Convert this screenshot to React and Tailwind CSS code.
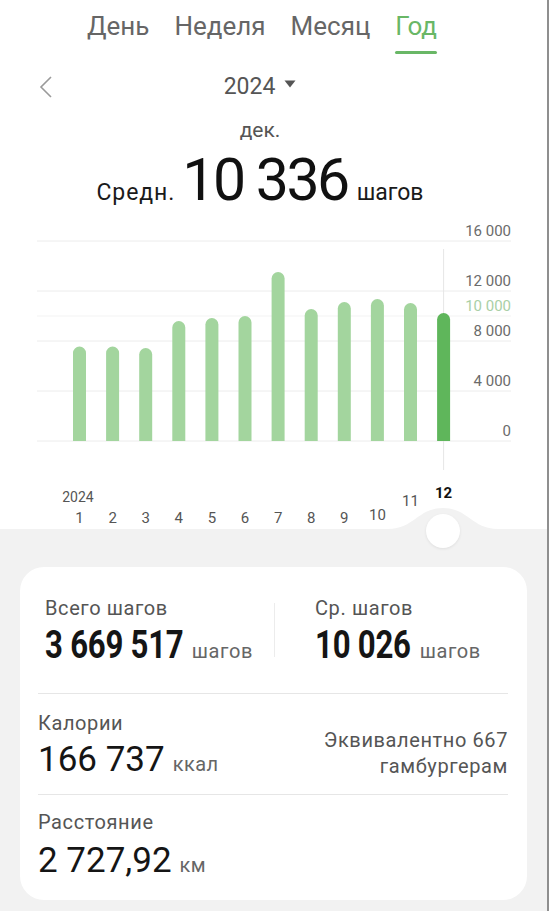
import React from "react";

const tabs = ["День", "Неделя", "Месяц", "Год"];

// top of each monthly bar in chart coordinates (baseline at 221)
const barTops = [126.5, 126.5, 128, 101, 98, 96, 52, 89, 82, 79, 83, 93];

const gridLines = [
  { y: 21, label: "16 000" },
  { y: 71, label: "12 000" },
  { y: 96, label: "10 000", goal: true },
  { y: 121, label: "8 000" },
  { y: 171, label: "4 000" },
  { y: 221, label: "0" },
];

// month labels sit on a curved dial, the selected one rises highest
const monthLabelY = [298, 298, 298, 298, 298, 298, 298, 298, 298, 295, 281, 273];

const barX = (i) => 79.5 + i * 33.1;

function barPath(cx, top, w = 13, base = 221) {
  const r = w / 2;
  const x = cx - r;
  return `M${x} ${base} V${top + r} A${r} ${r} 0 0 1 ${x + w} ${top + r} V${base} Z`;
}

function YearChart() {
  const selected = 11;
  return (
    <svg width="549" height="309" viewBox="0 0 549 309" className="block">
      {gridLines.map((g) => (
        <g key={g.label}>
          <line x1="37" x2="511" y1={g.y} y2={g.y} stroke={g.goal ? "#f3f3f3" : "#ececec"} strokeWidth="1" />
          <text
            x="511"
            y={g.y - 10}
            textAnchor="end"
            dominantBaseline="central"
            fontFamily="Roboto, sans-serif"
            fontSize="15"
            fill={g.goal ? "#a9cfa6" : "#6b6b6b"}
          >
            {g.label}
          </text>
        </g>
      ))}
      <line x1={barX(selected)} x2={barX(selected)} y1="29" y2="250" stroke="#e6e6e6" strokeWidth="1" />
      {barTops.map((top, i) => (
        <path key={i} d={barPath(barX(i), top)} fill={i === selected ? "#5fb65b" : "#a3d59e"} />
      ))}
      <text x="78" y="277" textAnchor="middle" dominantBaseline="central" fontFamily="Roboto, sans-serif" fontSize="14" fill="#555">
        2024
      </text>
      {monthLabelY.map((y, i) => (
        <text
          key={i}
          x={barX(i)}
          y={y}
          textAnchor="middle"
          dominantBaseline="central"
          fontFamily="Roboto, sans-serif"
          fontSize="15"
          fontWeight={i === selected ? 700 : 400}
          fill={i === selected ? "#111" : "#555"}
        >
          {i + 1}
        </text>
      ))}
      <path d="M388 309 C414 309 418 288 443 288 C468 288 472 309 498 309 Z" fill="#f2f2f2" />
    </svg>
  );
}

function Label({ children }) {
  return <div className="h-[24px] text-[20px] leading-[24px] tracking-[0.03em] text-[#555]">{children}</div>;
}

// headline totals use a condensed bold face, squeezed horizontally
function BoldValue({ value, unit, pull }) {
  return (
    <div className="mt-[3px] flex h-[44px] items-baseline gap-[8px]">
      <span className={`inline-block origin-left scale-x-[0.82] text-[38px] leading-[44px] font-bold tracking-[-0.3px] text-[#151515] ${pull}`}>
        {value}
      </span>
      <span className="text-[20px] tracking-[0.03em] text-[#666]">{unit}</span>
    </div>
  );
}

function Value({ value, unit, className = "" }) {
  return (
    <div className={`flex h-[44px] items-baseline gap-[8px] ${className}`}>
      <span className="text-[35px] leading-[44px] text-[#151515]">{value}</span>
      <span className="text-[20px] tracking-[0.02em] text-[#666]">{unit}</span>
    </div>
  );
}

export default function App() {
  return (
    <div
      className="flex h-[911px] w-[549px] flex-col overflow-hidden border-r-2 border-[#8f8f8f] bg-white"
      style={{ fontFamily: "Roboto, 'Noto Sans', sans-serif" }}
    >
      <div className="w-[520px]">
        <div className="flex gap-[25px] pl-[87px] pt-[10px]">
          {tabs.map((t, i) => (
            <div key={t} className="flex flex-col">
              <span className={`text-[26px] leading-[32px] ${i === 3 ? "text-[#69b766]" : "text-[#666]"}`}>{t}</span>
              {i === 3 && <span className="mt-[9px] h-[3px] rounded-full bg-[#69b766]" />}
            </div>
          ))}
        </div>

        <div className="relative mt-[18px] flex h-[30px] items-center justify-center">
          <svg className="absolute left-[39px] top-[4px]" width="14" height="22" viewBox="0 0 14 22">
            <polyline points="12,1 2,11 12,21" fill="none" stroke="#9a9a9a" strokeWidth="1.6" />
          </svg>
          <span className="text-[23px] leading-[30px] text-[#555]">2024</span>
          <svg className="ml-[9px] mb-[6px]" width="12" height="8" viewBox="0 0 12 8">
            <path d="M0.5 0.5 H11.5 L6 7.5 Z" fill="#555" />
          </svg>
        </div>

        <div className="mt-[15px] text-center text-[21px] leading-[26px] text-[#555]">дек.</div>

        <div className="mt-[7px] flex h-[59px] items-baseline justify-center">
          <span className="text-[23px] tracking-[0.04em] text-[#1a1a1a]">Средн.</span>
          <span className="ml-[7px] text-[59px] leading-[59px] tracking-[-2.5px] text-[#111]">10 336</span>
          <span className="ml-[9px] text-[23px] text-[#1a1a1a]">шагов</span>
        </div>
      </div>

      <div className="mt-[11px]">
        <YearChart />
      </div>

      <div className="relative flex-1 bg-[#f2f2f2] px-[20px] pt-[38px]">
        <div className="absolute left-[426px] top-[-15px] h-[34px] w-[34px] rounded-full bg-white shadow-[0_1px_3px_rgba(0,0,0,0.08)]" />

        <div className="rounded-[24px] bg-white pr-[19px] pl-[18px]">
          <div className="flex pt-[29px] pb-[26px] pl-[7px]">
            <div className="w-[229px]">
              <Label>Всего шагов</Label>
              <BoldValue value="3 669 517" unit="шагов" pull="-mr-[30px]" />
            </div>
            <div className="mt-[7px] h-[54px] w-px bg-[#ececec]" />
            <div className="pl-[40px]">
              <Label>Ср. шагов</Label>
              <BoldValue value="10 026" unit="шагов" pull="-mr-[20px]" />
            </div>
          </div>

          <div className="h-px bg-[#e6e6e6]" />

          <div className="flex items-end justify-between pt-[17px] pb-[12px]">
            <div>
              <Label>Калории</Label>
              <Value value="166 737" unit="ккал" className="mt-[3px]" />
            </div>
            <div className="mb-[3px] text-right text-[20px] leading-[26px] tracking-[0.03em] text-[#555]">
              <div>Эквивалентно 667</div>
              <div>гамбургерам</div>
            </div>
          </div>

          <div className="h-px bg-[#e6e6e6]" />

          <div className="pt-[15px] pb-[17px]">
            <Label>Расстояние</Label>
            <Value value="2 727,92" unit="км" className="mt-[5px]" />
          </div>
        </div>
      </div>
    </div>
  );
}
